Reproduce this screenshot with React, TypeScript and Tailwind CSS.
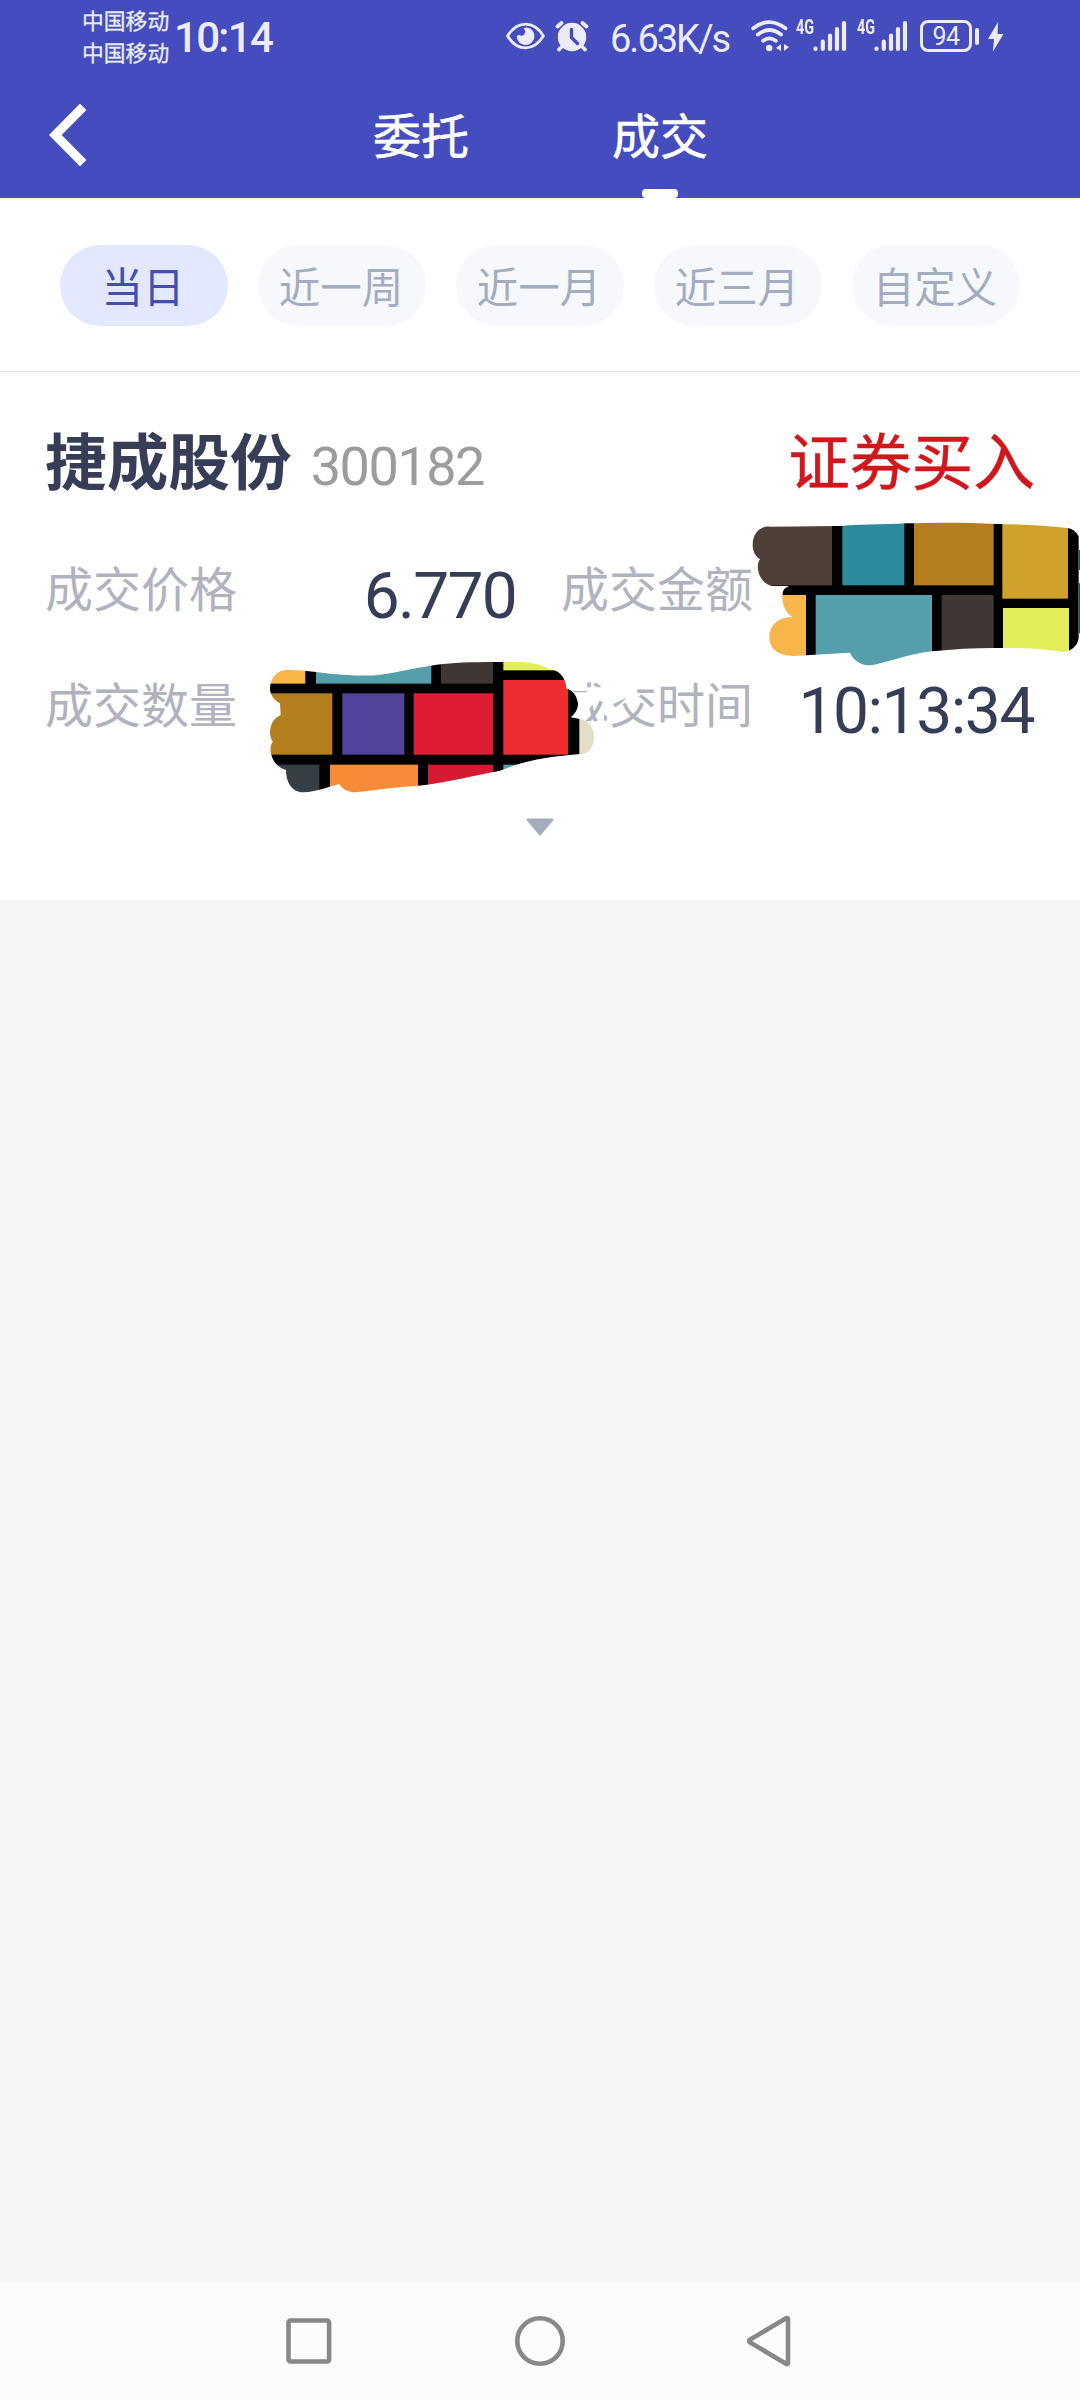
type DateRange = {
  id: string;
  label: string;
};

const ranges: DateRange[] = [
  { id: "today", label: "当日" },
  { id: "week", label: "近一周" },
  { id: "month", label: "近一月" },
  { id: "quarter", label: "近三月" },
  { id: "custom", label: "自定义" },
];

const activeRange = "today";

function SignalBars() {
  return (
    <svg className="h-8 w-[34px]" viewBox="0 0 34 32" fill="none" stroke="#ebebfa" strokeWidth="4.2" strokeLinecap="round">
      <path d="M2.5 28.6v.3M9.8 21.5v7.4M17 15.5v13.4M24 9v19.9M31 3v25.9" />
    </svg>
  );
}

function CellSignal() {
  return (
    <div className="flex h-8">
      <span className="w-[17px] origin-left scale-x-[0.72] font-['Roboto',sans-serif] text-[20px] leading-[15px] font-bold whitespace-nowrap">
        4G
      </span>
      <SignalBars />
    </div>
  );
}

function StatusBar() {
  return (
    <div className="flex h-[72px] items-start text-[#ebebfa]">
      <div className="ml-[82px] w-[92px] pt-1 font-['Noto_Sans_CJK_SC',sans-serif] text-[21.8px] leading-[31.5px] whitespace-nowrap [-webkit-text-stroke:0.3px]">
        <p>中国移动</p>
        <p>中国移动</p>
      </div>
      <span className="mt-[15px] w-[332px] font-['Roboto',sans-serif] text-[42px] leading-[46px] font-medium tracking-[-1.700px]">
        10:14
      </span>

      <svg className="mt-[22px] h-7 w-[39px]" viewBox="0 0 39 28" fill="none">
        <path d="M1.6 14C6.500 6 12.500 2.200 19.500 2.200S32.500 6 37.400 14C32.500 22 26.500 25.800 19.500 25.800S6.500 22 1.600 14Z" stroke="#ebebfa" strokeWidth="2.800" strokeLinejoin="round" />
        <path d="M21 5.500a8.800 8.800 0 1 1-10.200 8.500l2.200-1.200a3.600 3.600 0 1 0 4.500-6.300A9 9 0 0 1 21 5.500Z" fill="#ebebfa" />
      </svg>
      <svg className="mt-5 ml-[10px] h-8 w-[34px]" viewBox="0 0 34 32" fill="none">
        <circle cx="17" cy="17" r="14.200" fill="#ebebfa" />
        <path d="M1 7.500 8 1.500M33 7.500 26 1.500" stroke="#454cbe" strokeWidth="7" />
        <circle cx="17" cy="17" r="13.800" fill="#ebebfa" />
        <path d="M2.500 6.500 6.500 3M31.500 6.500 27.500 3M6.500 27l-2.500 2.500M27.500 27l2.500 2.500" stroke="#ebebfa" strokeWidth="3.800" strokeLinecap="round" />
        <path d="M16.500 9.500v8l6 6" stroke="#454cbe" strokeWidth="3.400" strokeLinecap="round" strokeLinejoin="round" />
      </svg>
      <span className="mt-[16px] ml-[21px] w-[141px] font-['Roboto',sans-serif] text-[38px] leading-[46px] tracking-[-2px]">
        6.63K/s
      </span>

      <svg className="mt-5 h-8 w-[39px]" viewBox="0 0 39 32" fill="none" stroke="#ebebfa" strokeWidth="3.800" strokeLinecap="round">
        <path d="M2.200 8.300Q18 -4 34.500 8.300M6.800 14.600Q18 5.500 30 14.600M12.200 20.800Q18 16 24.800 20.800" />
        <circle cx="18.200" cy="28" r="3.200" fill="#ebebfa" stroke="none" />
        <path d="M30 24v7l-5-3ZM33 24v7l5-4Z" fill="#ebebfa" stroke="none" />
      </svg>
      <div className="mt-5 ml-[6px] flex gap-[10px]">
        <CellSignal />
        <CellSignal />
      </div>
      <div className="mt-5 ml-[12px] flex items-center">
        <span className="flex h-8 w-[52px] items-center justify-center rounded-[8px] border-[3px] border-[#ebebfa] pt-px font-['Roboto',sans-serif] text-[25px] leading-none tracking-[-0.500px]">
          94
        </span>
        <span className="ml-[3px] h-[17px] w-1 rounded-full bg-[#ebebfa]" />
      </div>
      <svg className="mt-[22px] ml-[9px] h-[30px] w-4" viewBox="0 0 16 30" fill="#ebebfa">
        <path d="M10 0 0 17h6L5 29.500 15.500 12H9.500Z" />
      </svg>
    </div>
  );
}

function Header() {
  return (
    <header className="h-[198px] bg-[#454cbe] text-white">
      <StatusBar />
      <nav className="flex h-[126px] items-start font-['Noto_Sans_CJK_SC',sans-serif] text-[48px] leading-[48px] [-webkit-text-stroke:0.6px]">
        <svg className="mt-8 ml-12 h-[62px] w-10" viewBox="0 0 40 62" fill="none" stroke="white" strokeWidth="9">
          <path d="M35.200 2.800 7.300 31l27.900 28.200" />
        </svg>
        <span className="mt-[37px] ml-[285px]">委托</span>
        <div className="mt-[37px] ml-[143px] flex flex-col items-center">
          <span>成交</span>
          <span className="mt-[32px] h-[9px] w-9 rounded-[4px] bg-white" />
        </div>
      </nav>
    </header>
  );
}

function RangeTabs() {
  return (
    <div className="flex h-[174px] justify-center gap-[30px] border-b border-[#e3e3e4] bg-white pt-[47px]">
      {ranges.map((range) => (
        <button
          key={range.id}
          type="button"
          className={`h-[81px] w-[168px] rounded-full pr-[2px] font-['Noto_Sans_CJK_SC',sans-serif] text-[41.500px] leading-none ${
            range.id === activeRange
              ? "bg-[#e4e8fe] text-[#454cb2]"
              : "bg-[#f6f8fc] text-[#a3adbf]"
          }`}
        >
          {range.label}
        </button>
      ))}
    </div>
  );
}

// Marker strokes that hide the traded amount and quantity.
function AmountMask() {
  return (
    <svg className="absolute top-[128px] left-[730px] h-[180px] w-[350px]" viewBox="0 0 1050 540">
      <mask id="amount-mask" maskUnits="userSpaceOnUse" x="0" y="0" width="1050" height="540">
        <path
          fill="white"
          d="M120 80C90 78 68 100 68 135C68 155 78 170 90 178C80 190 82 215 92 232C102 250 118 258 135 258H178C166 262 158 270 158 282C154 305 162 335 188 352C150 350 118 372 118 412C118 445 145 468 190 468L360 458C370 480 390 496 420 496C460 492 520 465 605 454C680 446 750 443 815 444C900 442 960 450 1000 456C1030 452 1042 435 1046 415V110C1040 95 1025 85 1010 84C950 76 880 73 800 72C700 66 600 68 530 70C450 74 380 74 330 78Z"
        />
      </mask>
      <g mask="url(#amount-mask)">
        <rect width="1050" height="540" fill="#000" />
        <rect y="0" width="306" height="256" fill="#4e4038" />
        <rect x="337" width="186" height="256" fill="#2d8b9d" />
        <rect x="552" width="239" height="256" fill="#b47e1e" />
        <rect x="817" width="197" height="296" fill="#d0a22c" />
        <rect y="285" width="228" height="240" fill="#f8b54a" />
        <rect x="257" y="285" width="349" height="240" fill="#559eac" />
        <rect x="635" y="285" width="156" height="240" fill="#3f3733" />
        <rect x="819" y="324" width="198" height="200" fill="#e3ee5b" />
      </g>
      <path d="M1046 150h4v60h-4ZM1046 250h4v150h-4Z" fill="#1d5d50" />
    </svg>
  );
}

function QuantityMask() {
  return (
    <svg className="absolute top-[268px] left-[250px] h-[170px] w-[400px]" viewBox="0 0 1200 510">
      <path
        fill="white"
        fillRule="evenodd"
        d="M940 100H1162V160L1132 172L1090 192L1080 270H940ZM1008 118H1052V142H1008ZM970 144H1010V157H970ZM1006 244L1012 212L1040 180L1061 186L1042 244ZM1062 214H1074V242H1062Z"
      />
      <mask id="quantity-mask" maskUnits="userSpaceOnUse" x="0" y="0" width="1200" height="510">
        <path
          fill="white"
          d="M110 90C80 90 60 115 60 148C62 170 78 185 90 190L92 225C70 235 60 255 60 280C60 290 64 298 68 305C60 318 60 335 65 348C72 370 88 385 108 390C108 425 125 457 160 457C200 455 230 442 268 432C278 448 295 457 318 457C380 450 440 440 505 437C590 428 680 405 750 392C800 372 860 352 990 342C1015 342 1032 322 1032 290C1032 262 1015 240 985 236L962 232C975 222 984 208 984 190C980 165 968 150 950 146C945 105 925 90 895 86C870 72 840 67 810 66H730C660 66 610 68 560 74C500 82 440 98 380 106C320 108 260 104 215 98C170 92 140 90 110 90Z"
        />
      </mask>
      <g mask="url(#quantity-mask)">
        <rect width="1080" height="510" fill="#000" />
        <rect width="166" height="131" fill="#f8b54a" />
        <rect x="198" width="346" height="131" fill="#559eac" />
        <rect x="573" width="156" height="131" fill="#3f3733" />
        <rect x="760" width="200" height="91" fill="#e3ee5b" />
        <rect y="160" width="247" height="184" fill="#b47e1e" />
        <rect x="277" y="160" width="186" height="184" fill="#53439b" />
        <rect x="491" y="160" width="239" height="184" fill="#dc1d34" />
        <rect x="760" y="120" width="194" height="224" fill="#ed2d31" />
        <rect y="374" width="208" height="130" fill="#373d45" />
        <rect x="240" y="374" width="264" height="130" fill="#f88b38" />
        <rect x="534" y="374" width="195" height="130" fill="#d61a31" />
        <rect x="760" y="374" width="195" height="130" fill="#559eac" />
        <rect x="988" y="230" width="60" height="120" fill="#e3dfc5" />
      </g>
    </svg>
  );
}

function TradeRecord() {
  return (
    <section className="relative h-[528px] bg-white px-[45px] text-[#373c57]">
      <div className="flex items-start pt-[55px] leading-[62px]">
        <h2 className="font-['Noto_Sans_CJK_SC',sans-serif] text-[61.700px] font-bold">捷成股份</h2>
        <span className="mt-[9px] ml-[19px] font-['Roboto',sans-serif] text-[54px] tracking-[-1.500px] text-[#9c9c9c]">
          300182
        </span>
        <span className="ml-auto font-['Noto_Sans_CJK_SC',sans-serif] text-[61.700px] text-[#d0181c] [-webkit-text-stroke:0.5px]">
          证券买入
        </span>
      </div>

      <dl className="mt-[52px] grid grid-cols-[472px_473px] gap-x-[44px] gap-y-[52px] leading-[64px]">
        <div className="flex h-16 justify-between">
          <dt className="mt-1 font-['Noto_Sans_CJK_SC',sans-serif] text-[48px] text-[#b0b2be]">成交价格</dt>
          <dd className="mt-[15px] mr-px font-['Roboto',sans-serif] text-[64px] tracking-[-1.700px]">6.770</dd>
        </div>
        <div className="flex h-16">
          <dt className="mt-1 font-['Noto_Sans_CJK_SC',sans-serif] text-[48px] text-[#b0b2be]">成交金额</dt>
        </div>
        <div className="flex h-16">
          <dt className="mt-1 font-['Noto_Sans_CJK_SC',sans-serif] text-[48px] text-[#b0b2be]">成交数量</dt>
        </div>
        <div className="flex h-16 justify-between">
          <dt className="mt-1 font-['Noto_Sans_CJK_SC',sans-serif] text-[48px] text-[#b0b2be]">成交时间</dt>
          <dd className="mt-[14px] font-['Roboto',sans-serif] text-[64px] tracking-[-1.400px]">10:13:34</dd>
        </div>
      </dl>

      <svg className="mx-auto mt-[88px] h-[18px] w-7" viewBox="0 0 28 18" fill="#a3adbf" stroke="#a3adbf" strokeWidth="2" strokeLinejoin="round">
        <path d="M1.500 1.500h25L14 16.500Z" />
      </svg>

      <AmountMask />
      <QuantityMask />
    </section>
  );
}

function SystemNav() {
  return (
    <footer className="flex h-[118px] items-center justify-center gap-[177px] bg-[#fcfcfc]">
      <svg className="h-[54px] w-[54px]" viewBox="0 0 54 54" fill="none" stroke="#888" strokeWidth="4.600">
        <rect x="6.500" y="6.500" width="40.600" height="41" rx="2" />
      </svg>
      <svg className="h-[54px] w-[54px]" viewBox="0 0 54 54" fill="none" stroke="#888" strokeWidth="4.600">
        <circle cx="27" cy="27" r="22.700" />
      </svg>
      <svg className="h-[54px] w-[54px]" viewBox="0 0 54 54" fill="none" stroke="#888" strokeWidth="4.600" strokeLinejoin="round">
        <path d="M5.800 25.700Q4.500 27 5.800 28.300L42.500 50Q44 50.300 44 49V5Q44 3.700 42.500 4Z" />
      </svg>
    </footer>
  );
}

export default function App() {
  return (
    <div className="flex h-[2400px] w-[1080px] flex-col overflow-hidden bg-[#f3f5f7]">
      <Header />
      <RangeTabs />
      <TradeRecord />
      <main className="flex-1" />
      <SystemNav />
    </div>
  );
}
